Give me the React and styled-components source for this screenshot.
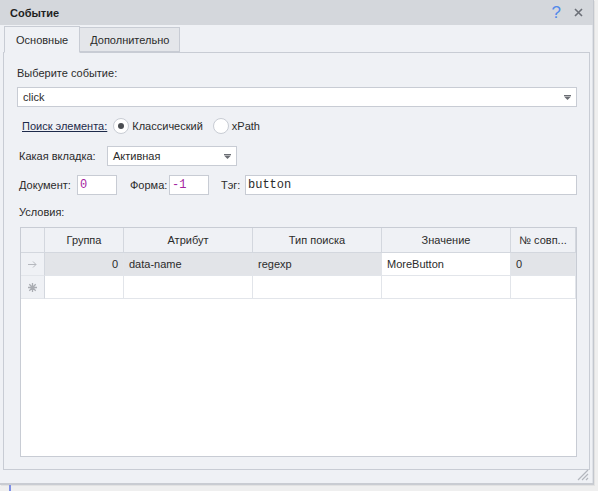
import React from 'react';
import styled, { createGlobalStyle } from 'styled-components';

const GlobalStyle = createGlobalStyle`
  html, body {
    margin: 0;
    padding: 0;
    background: #eeeeee;
  }
  * {
    box-sizing: border-box;
  }
`;

const Page = styled.div`
  width: 598px;
  height: 491px;
  overflow: hidden;
  background: #efefef;
  font-family: 'Liberation Sans', Arial, sans-serif;
  font-size: 11px;
  color: #2b2b2b;
`;

const Window = styled.div`
  width: 594px;
  height: 485px;
  display: flex;
  flex-direction: column;
  background: #eff1f5;
  border-right: 1px solid #c3c7ce;
  border-bottom: 2px solid #c9ccd2;
  box-shadow: 1px 1px 0 #e2e2e2;
`;

const TitleBar = styled.div`
  height: 25px;
  flex: none;
  display: flex;
  align-items: center;
  justify-content: space-between;
  padding: 0 8px 0 10px;
  background: #d4d7dc;
  border-right: 2px solid #d4d7dc;
`;

const Title = styled.span`
  font-weight: 700;
  font-size: 11px;
  color: #1f1f1f;
`;

const TitleButtons = styled.div`
  display: flex;
  align-items: center;
  gap: 13px;
`;

const Help = styled.span`
  color: #5289ea;
  font-size: 17px;
  line-height: 1;
`;

const Body = styled.div`
  flex: 1;
  display: flex;
  flex-direction: column;
  padding: 2px 2px 0 3px;
  border-right: 1px solid #dfe2e7;
  position: relative;
`;

const TabStrip = styled.div`
  display: flex;
  align-items: flex-end;
  height: 26px;
  padding-left: 1px;
  margin-bottom: -1px;
  position: relative;
  z-index: 1;
`;

const Tab = styled.div`
  height: ${(p) => (p.active ? '27px' : '25px')};
  margin-bottom: ${(p) => (p.active ? '0' : '1px')};
  padding: 0 ${(p) => (p.active ? 11 : 10)}px;
  display: flex;
  align-items: center;
  background: ${(p) => (p.active ? '#eff1f5' : '#e4e6ea')};
  border: 1px solid #c8ccd4;
  border-bottom: ${(p) => (p.active ? '1px solid #eff1f5' : '1px solid #c8ccd4')};
  border-left: ${(p) => (p.first ? '1px solid #c8ccd4' : 'none')};
  color: #2b2b2b;
`;

const Panel = styled.div`
  height: 418px;
  border: 1px solid #c8ccd4;
  padding: 12px 12px 0 13px;
  display: flex;
  flex-direction: column;
`;

const Label = styled.div`
  height: 16px;
  line-height: 16px;
  margin-top: ${(p) => p.mt || 0}px;
  padding-left: ${(p) => p.pl || 0}px;
`;

const Field = styled.div`
  height: 20px;
  display: flex;
  align-items: center;
  justify-content: space-between;
  background: #ffffff;
  border: 1px solid #c8ccd4;
  padding: 0 5px 0 ${(p) => (p.mono ? 2 : 5)}px;
  width: ${(p) => (p.w ? `${p.w}px` : 'auto')};
  flex: ${(p) => (p.grow ? 1 : 'none')};
  font-family: ${(p) => (p.mono ? "'Liberation Mono', 'Courier New', monospace" : 'inherit')};
  font-size: ${(p) => (p.mono ? 12 : 11)}px;
  color: ${(p) => (p.purple ? '#a5249f' : '#2b2b2b')};
`;

const Combo = styled(Field)`
  margin-top: 6px;
  padding-right: 5px;
`;

const Arrow = () => (
  <svg width="7" height="5" viewBox="0 0 7 5">
    <rect x="0" y="0" width="7" height="1" fill="#6a6d73" />
    <path d="M0 1.5 H7 L3.5 5 Z" fill="#6a6d73" />
  </svg>
);

const Row = styled.div`
  display: flex;
  align-items: center;
  height: 20px;
  margin-top: ${(p) => p.mt || 0}px;
  padding-left: ${(p) => p.pl || 0}px;
`;

const LinkLabel = styled.span`
  text-decoration: underline;
  color: #1d2a4a;
  margin-right: 6px;
`;

const RadioOption = styled.label`
  display: flex;
  align-items: center;
  gap: 3px;
  margin-right: 10px;
`;

const RadioCircle = styled.span`
  width: 16px;
  height: 16px;
  border-radius: 50%;
  border: 1px solid #c8ccd4;
  background: #ffffff;
  display: flex;
  align-items: center;
  justify-content: center;
  &::after {
    content: '';
    width: 6px;
    height: 6px;
    border-radius: 50%;
    background: ${(p) => (p.checked ? '#4a4d52' : 'transparent')};
  }
`;

const InlineLabel = styled.span`
  flex: none;
  width: ${(p) => p.w}px;
  margin-left: ${(p) => p.ml || 0}px;
`;

const Table = styled.div`
  margin: 7px 0 0 3px;
  height: 230px;
  background: #ffffff;
  border: 1px solid #c8ccd4;
  display: grid;
  grid-template-columns: 24px 79px 129px 129px 129px 1fr;
  grid-auto-rows: 23px;
  grid-template-rows: 25px;
  align-content: start;
`;

const HeadCell = styled.div`
  background: #eff1f5;
  border-right: 1px solid #d3d7de;
  border-bottom: 1px solid #d3d7de;
  display: flex;
  align-items: center;
  justify-content: center;
  white-space: nowrap;
  overflow: hidden;
  color: #2b2b2b;
  &:last-child {
    border-right: none;
  }
`;

const Cell = styled.div`
  background: ${(p) => (p.selected ? '#e2e4e8' : '#ffffff')};
  border-right: 1px solid #e2e5ea;
  border-bottom: 1px solid #e2e5ea;
  display: flex;
  align-items: center;
  justify-content: ${(p) => (p.right ? 'flex-end' : 'flex-start')};
  padding: 0 5px;
  color: #2b2b2b;
`;

const Indicator = styled.div`
  background: #eff1f5;
  border-right: 1px solid #d3d7de;
  border-bottom: 1px solid #e2e5ea;
  display: flex;
  align-items: center;
  justify-content: center;
  color: #b5b8be;
`;

const Grip = styled.svg`
  position: absolute;
  right: 3px;
  bottom: 2px;
`;

const BelowStrip = styled.div`
  height: 6px;
  padding-left: 9px;
`;

const BlueMark = styled.span`
  display: block;
  width: 2px;
  height: 6px;
  background: #7d8fe6;
`;

const columns = ['Группа', 'Атрибут', 'Тип поиска', 'Значение', '№ совп...'];

const rows = [
  { group: '0', attr: 'data-name', type: 'regexp', value: 'MoreButton', index: '0' },
];

export default function App() {
  return (
    <>
      <GlobalStyle />
      <Page>
        <Window>
          <TitleBar>
            <Title>Событие</Title>
            <TitleButtons>
              <Help>?</Help>
              <svg width="9" height="9" viewBox="0 0 9 9">
                <path d="M1 1 L8 8 M8 1 L1 8" stroke="#6b6f77" strokeWidth="1.6" />
              </svg>
            </TitleButtons>
          </TitleBar>
          <Body>
            <TabStrip>
              <Tab active first>Основные</Tab>
              <Tab>Дополнительно</Tab>
            </TabStrip>
            <Panel>
              <Label>Выберите событие:</Label>
              <Combo>
                <span>click</span>
                <Arrow />
              </Combo>
              <Row mt={9} pl={5}>
                <LinkLabel>Поиск элемента:</LinkLabel>
                <RadioOption>
                  <RadioCircle checked />
                  Классический
                </RadioOption>
                <RadioOption>
                  <RadioCircle />
                  xPath
                </RadioOption>
              </Row>
              <Row mt={10} pl={2}>
                <InlineLabel w={88}>Какая вкладка:</InlineLabel>
                <Field w={130}>
                  <span>Активная</span>
                  <Arrow />
                </Field>
              </Row>
              <Row mt={9} pl={2}>
                <InlineLabel w={58}>Документ:</InlineLabel>
                <Field w={40} mono purple>0</Field>
                <InlineLabel w={39} ml={13}>Форма:</InlineLabel>
                <Field w={40} mono purple>-1</Field>
                <InlineLabel w={24} ml={12}>Тэг:</InlineLabel>
                <Field grow mono>button</Field>
              </Row>
              <Label mt={9} pl={2}>Условия:</Label>
              <Table>
                <HeadCell />
                {columns.map((c) => (
                  <HeadCell key={c}>{c}</HeadCell>
                ))}
                {rows.map((r) => (
                  <React.Fragment key={r.attr}>
                    <Indicator>
                      <svg width="9" height="7" viewBox="0 0 9 7">
                        <path d="M0 3.5 H8 M5 0.5 L8 3.5 L5 6.5" stroke="#b5b8be" fill="none" />
                      </svg>
                    </Indicator>
                    <Cell selected right>{r.group}</Cell>
                    <Cell selected>{r.attr}</Cell>
                    <Cell selected>{r.type}</Cell>
                    <Cell>{r.value}</Cell>
                    <Cell selected>{r.index}</Cell>
                  </React.Fragment>
                ))}
                <Indicator>
                  <svg width="9" height="9" viewBox="0 0 9 9">
                    <path d="M4.5 0 V9 M0 4.5 H9 M1.3 1.3 L7.7 7.7 M7.7 1.3 L1.3 7.7" stroke="#a9acb2" strokeWidth="1.3" />
                  </svg>
                </Indicator>
                <Cell />
                <Cell />
                <Cell />
                <Cell />
                <Cell />
              </Table>
            </Panel>
            <Grip width="12" height="12" viewBox="0 0 12 12">
              <path d="M11 1 L1 11 M11 5 L5 11 M11 9 L9 11" stroke="#b3b7be" strokeWidth="1.2" />
            </Grip>
          </Body>
        </Window>
        <BelowStrip>
          <BlueMark />
        </BelowStrip>
      </Page>
    </>
  );
}
